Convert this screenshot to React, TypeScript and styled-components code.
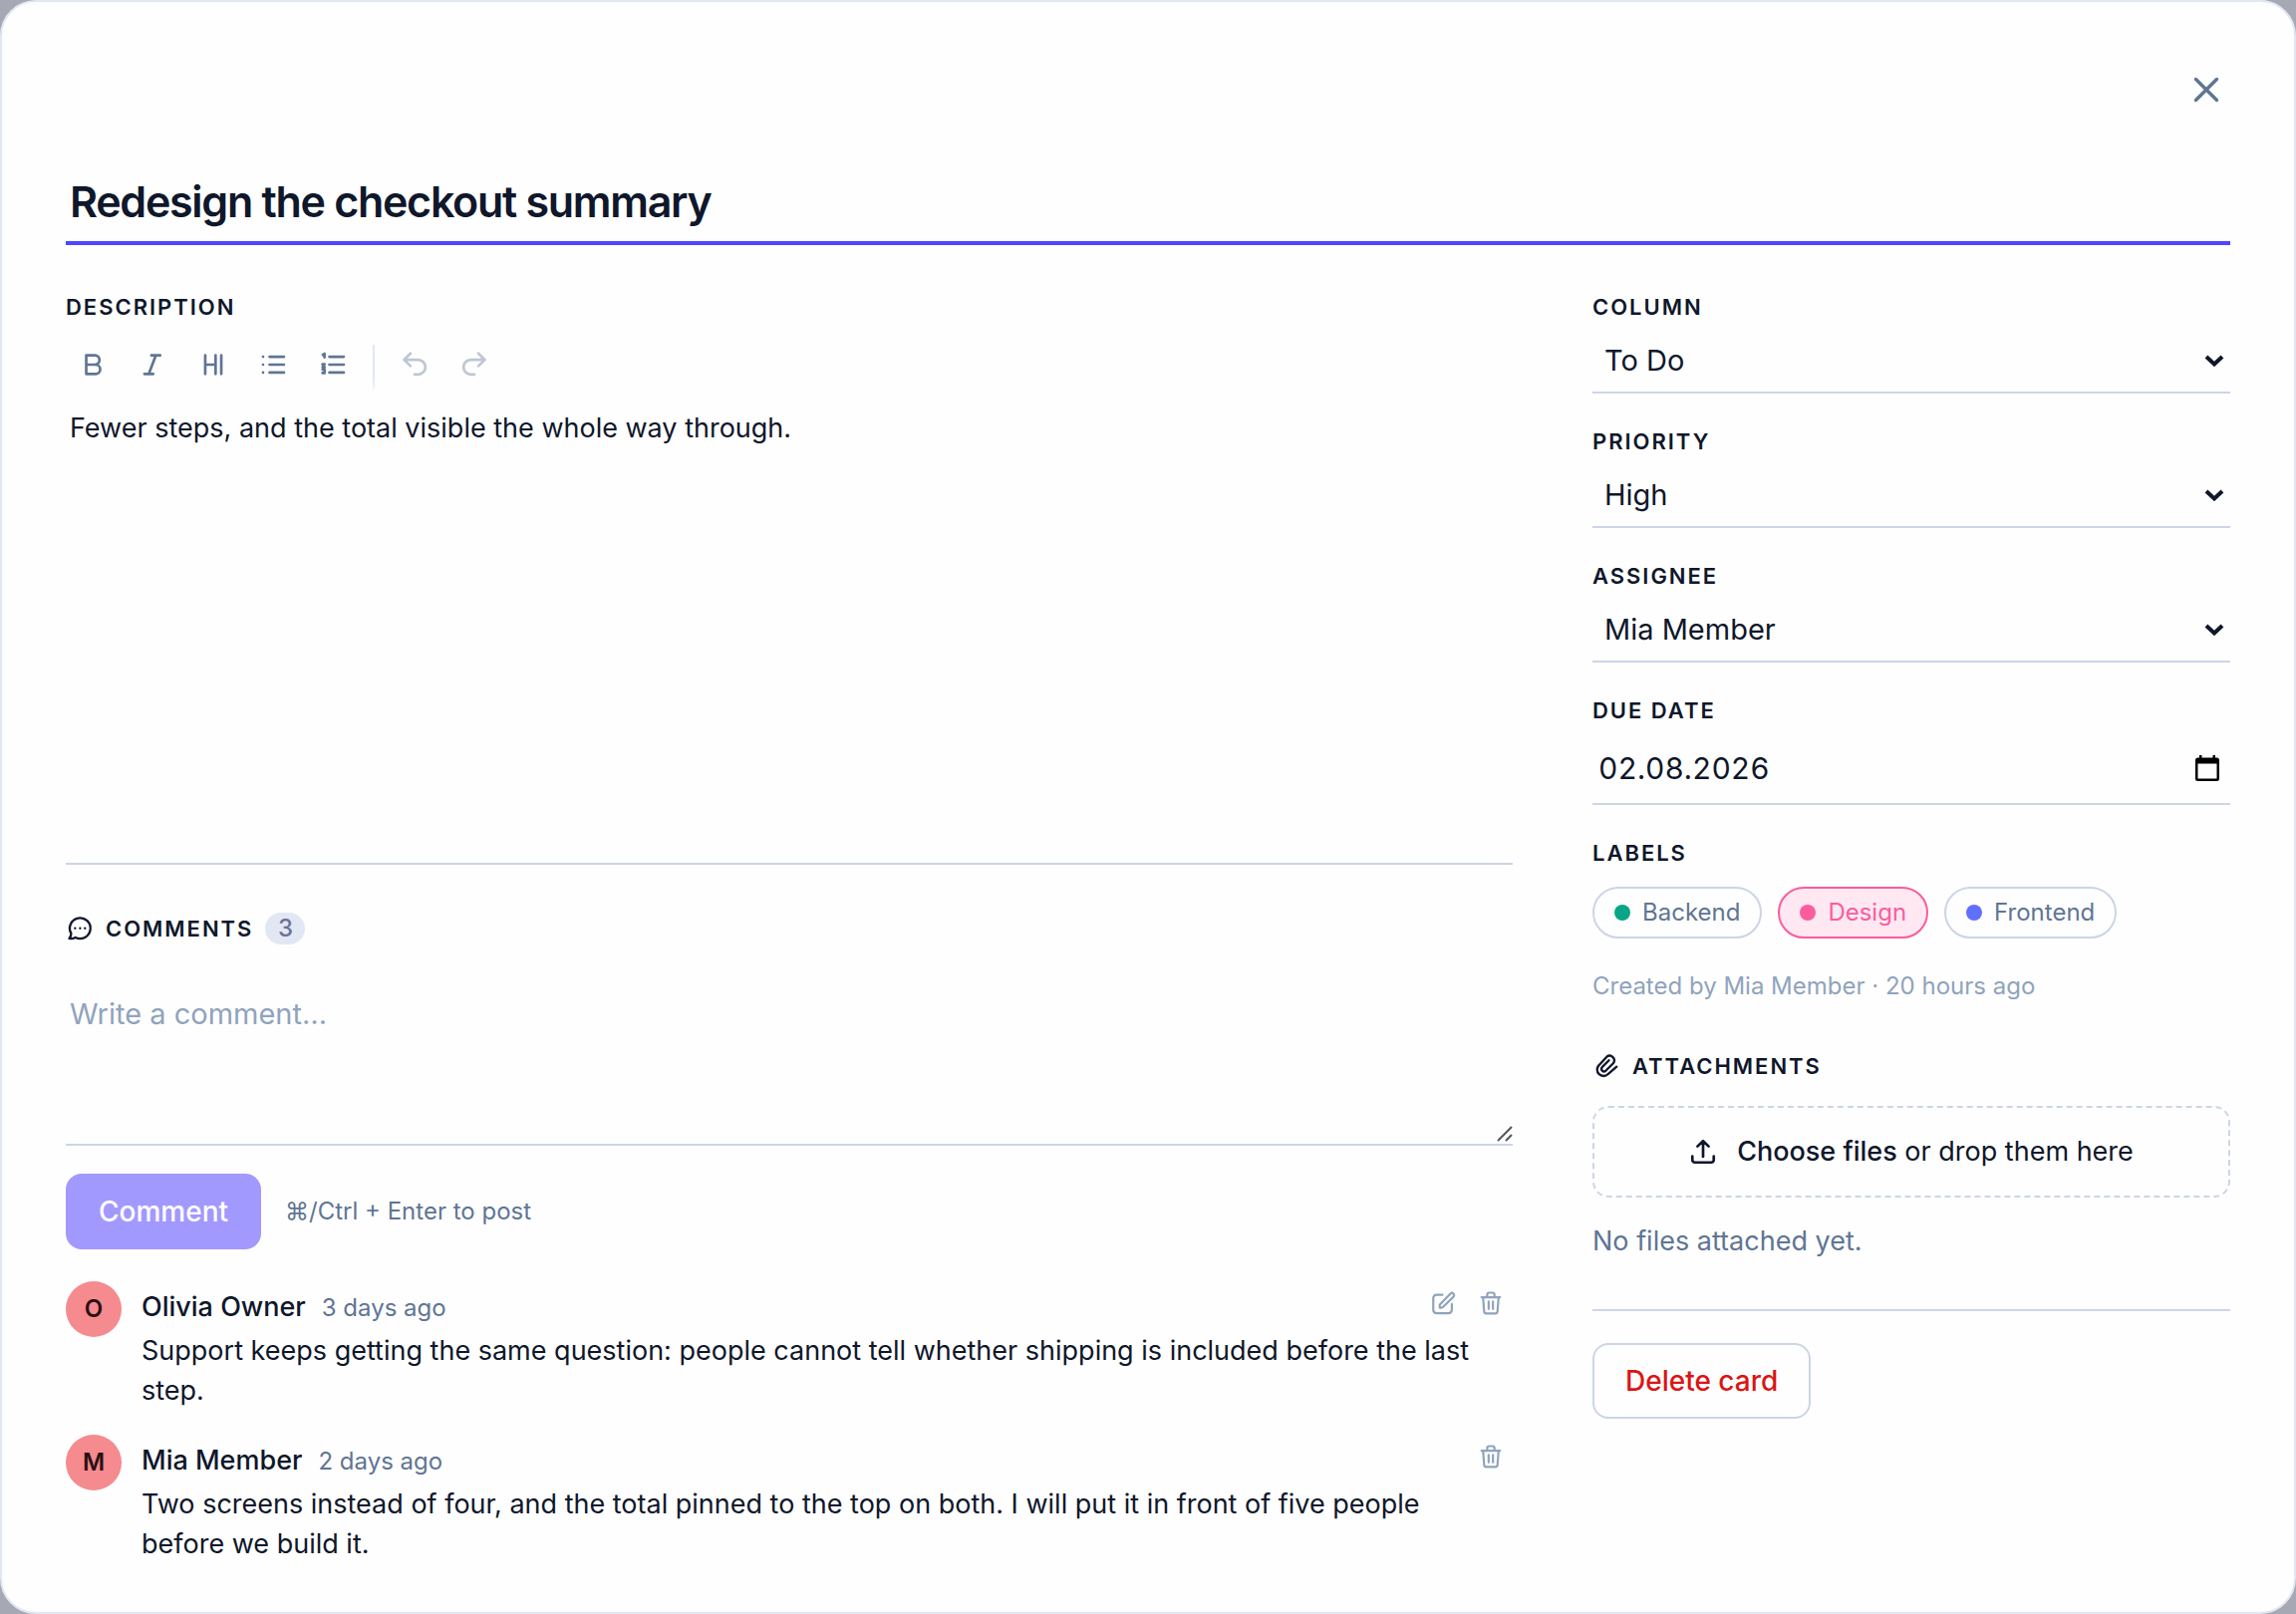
import React, { useState } from "react";
import styled, { createGlobalStyle, css } from "styled-components";

const c = {
  ink: "#0f172b",
  muted: "#607594",
  faint: "#90a3bd",
  line: "#ccd5e6",
  soft: "#e2e7f4",
  accent: "#5046ff",
  danger: "#dc1414",
};

const Global = createGlobalStyle`
  *, *::before, *::after { box-sizing: border-box; }
  body {
    margin: 0;
    background: #a6a9b3;
    color: ${c.ink};
    font-family: Inter, "Noto Sans", "Liberation Sans", sans-serif;
    font-size: 27px;
    line-height: 40px;
  }
  button, input, select, textarea { font: inherit; color: inherit; }
  button { cursor: pointer; }
`;

/* ---------- shell ---------- */

const Dialog = styled.main`
  display: flex;
  flex-direction: column;
  min-height: 100vh;
  padding: 64px 64px 48px;
  background: #fefefe;
  border: 2px solid ${c.soft};
  border-radius: 36px;
`;

const TopBar = styled.header`
  display: flex;
  justify-content: flex-end;
`;

const IconButton = styled.button<{ $size: number; $tone?: string }>`
  display: inline-flex;
  align-items: center;
  justify-content: center;
  flex: none;
  width: ${(p) => p.$size}px;
  height: ${(p) => p.$size}px;
  padding: 0;
  border: 0;
  border-radius: 12px;
  background: none;
  color: ${(p) => p.$tone ?? c.muted};

  &:disabled {
    opacity: 0.4;
    cursor: default;
  }
`;

const TitleInput = styled.input`
  width: 100%;
  height: 84px;
  margin-top: 48px;
  padding: 0 4px;
  border: 0;
  border-bottom: 4px solid ${c.accent};
  outline: none;
  background: none;
  font-size: 43px;
  font-weight: 600;
  letter-spacing: -0.03em;
`;

const Columns = styled.div`
  display: grid;
  grid-template-columns: minmax(0, 1fr) 640px;
  gap: 80px;
  margin-top: 44px;
`;

const MainColumn = styled.div`
  display: flex;
  flex-direction: column;
`;

const SideColumn = styled.aside`
  display: flex;
  flex-direction: column;
  gap: 30px;
`;

const caps = css`
  font-size: 22px;
  font-weight: 600;
  line-height: 36px;
  letter-spacing: 0.09em;
  text-transform: uppercase;
`;

const FieldLabel = styled.label`
  ${caps}
`;

const GroupLabel = styled.h2`
  ${caps}
  display: flex;
  align-items: center;
  gap: 12px;
  margin: 0;
`;

/* ---------- editor ---------- */

const Toolbar = styled.div`
  display: flex;
  align-items: center;
  gap: 4px;
  height: 56px;
  margin-top: 12px;
`;

const ToolDivider = styled.span`
  align-self: flex-end;
  width: 2px;
  height: 48px;
  margin: 0 8px;
  background: linear-gradient(${c.soft} 75%, transparent);
`;

const TextArea = styled.textarea<{ $height: number; $pad: number }>`
  display: block;
  width: 100%;
  height: ${(p) => p.$height}px;
  padding: ${(p) => p.$pad}px 4px 0;
  border: 0;
  border-bottom: 2px solid ${c.line};
  border-radius: 0;
  outline: none;
  background: none;
  resize: none;

  &::placeholder {
    color: ${c.faint};
    opacity: 1;
  }
`;

const CommentArea = styled(TextArea)`
  font-size: 29px;
  line-height: 44px;
`;

const ResizeBox = styled.div`
  position: relative;
  margin-top: 24px;
`;

const Grip = styled.svg`
  position: absolute;
  right: 0;
  bottom: 4px;
  width: 16px;
  height: 16px;
  color: #55565c;
  pointer-events: none;
`;

/* ---------- comments ---------- */

const CommentsHeading = styled(GroupLabel)`
  margin-top: 48px;
  line-height: 32px;
`;

const Count = styled.span`
  min-width: 40px;
  padding: 0 12px;
  border-radius: 16px;
  background: ${c.soft};
  color: #6b7299;
  font-size: 24px;
  font-weight: 500;
  letter-spacing: 0;
  text-align: center;
`;

const PostRow = styled.div`
  display: flex;
  align-items: center;
  gap: 24px;
  margin-top: 28px;
`;

const Button = styled.button<{ $kind: "primary" | "danger" }>`
  height: 76px;
  padding: 0 31px;
  border: 2px solid ${(p) => (p.$kind === "primary" ? "#a299ff" : c.line)};
  border-radius: 16px;
  background: ${(p) => (p.$kind === "primary" ? "#a299ff" : "transparent")};
  color: ${(p) => (p.$kind === "primary" ? "#ffffff" : c.danger)};
  font-size: 28px;
  font-weight: 500;
`;

const Small = styled.span<{ $tone?: string }>`
  color: ${(p) => p.$tone ?? c.muted};
  font-size: 24px;
  line-height: 36px;
`;

const CommentList = styled.ul`
  display: flex;
  flex-direction: column;
  gap: 24px;
  margin: 32px 0 0;
  padding: 0;
  list-style: none;
`;

const CommentItem = styled.li`
  display: grid;
  grid-template-columns: 56px minmax(0, 1fr);
  column-gap: 20px;
`;

const Avatar = styled.span`
  display: flex;
  align-items: center;
  justify-content: center;
  width: 56px;
  height: 56px;
  border-radius: 50%;
  background: #f58a8f;
  color: #2b0f14;
  font-size: 24px;
  font-weight: 600;
`;

const CommentHead = styled.div`
  display: flex;
  justify-content: space-between;
  height: 50px;
`;

const Byline = styled.div`
  display: flex;
  align-items: baseline;
  gap: 16px;
  padding-top: 6px;
`;

const Author = styled.strong`
  font-weight: 500;
`;

const Actions = styled.div`
  display: flex;
  gap: 4px;
`;

const Body = styled.p`
  margin: 0;
  padding-right: 16px;
`;

/* ---------- sidebar ---------- */

const Field = styled.div`
  display: flex;
  flex-direction: column;
  gap: 5px;
`;

const LabelsField = styled(Field)`
  gap: 16px;
`;

const ControlBox = styled.div`
  display: grid;
  align-items: center;

  & > * {
    grid-area: 1 / 1;
  }
  & > svg {
    justify-self: end;
    margin-bottom: 2px;
    pointer-events: none;
  }
`;

const control = css`
  width: 100%;
  border: 0;
  border-bottom: 2px solid ${c.line};
  border-radius: 0;
  outline: none;
  background: none;
`;

const Select = styled.select`
  ${control}
  height: 64px;
  padding: 0 12px;
  appearance: none;
  font-size: 29px;
`;

const DateInput = styled.input`
  ${control}
  height: 72px;
  padding: 0 6px;
  font-size: 30px;
  font-variant-numeric: tabular-nums;
`;

const Chevron = styled.svg`
  width: 20px;
  height: 12px;
  margin-right: 6px;
`;

const Calendar = styled.svg`
  width: 24px;
  height: 26px;
  margin-right: 11px;
`;

const Chips = styled.div`
  display: flex;
  flex-wrap: wrap;
  gap: 16px;
`;

const Chip = styled.button<{ $dot: string }>`
  display: inline-flex;
  align-items: center;
  gap: 12px;
  height: 52px;
  padding: 0 20px;
  border: 2px solid ${c.line};
  border-radius: 26px;
  background: none;
  color: ${c.muted};
  font-size: 24px;

  &::before {
    content: "";
    width: 16px;
    height: 16px;
    border-radius: 50%;
    background: ${(p) => p.$dot};
  }

  &[aria-pressed="true"] {
    border-color: ${(p) => p.$dot};
    background: #ffe8f2;
    color: ${(p) => p.$dot};
  }
`;

const Attachments = styled.section`
  display: flex;
  flex-direction: column;
  margin-top: 14px;
`;

const DropZone = styled.label`
  display: flex;
  align-items: center;
  justify-content: center;
  gap: 20px;
  height: 92px;
  margin-top: 22px;
  border: 2px dashed ${c.line};
  border-radius: 16px;
  cursor: pointer;

  input {
    position: absolute;
    width: 1px;
    height: 1px;
    opacity: 0;
  }
  strong {
    font-weight: 500;
  }
`;

const Empty = styled.p`
  margin: 24px 0 0;
  color: ${c.muted};
`;

const Footer = styled.div`
  margin-top: 18px;
  padding-top: 32px;
  border-top: 2px solid ${c.line};
`;

/* ---------- icons ---------- */

const Svg = styled.svg<{ $size: number }>`
  display: block;
  flex: none;
  width: ${(p) => p.$size}px;
  height: ${(p) => p.$size}px;
  fill: none;
  stroke: currentColor;
  stroke-linecap: round;
  stroke-linejoin: round;
`;

const paths = {
  close: "M5 5l14 14M19 5L5 19",
  bold: "M5.6 4H13a4 4 0 0 1 0 8H5.6zM5.6 12h8a4 4 0 0 1 0 8h-8z",
  italic: "M4.2 20h7.6M10.2 4h7.6M8 20 14 4",
  heading: "M5.1 4v16M14 4v16M5.1 12H14M18.9 4v16",
  bullets: "M9 5.2h12.4M9 12h12.4M9 18.8h12.4M3.4 5.2h.01M3.4 12h.01M3.4 18.8h.01",
  numbers:
    "M9 5.2h12.4M9 12h12.4M9 18.8h12.4M3.4 3.6l1.400-1v3.200M3 11.6h1.900l-1.700 2.600h1.700M3.200 16.200h1.700v3H3.100",
  undo: "M8.5 13.2 3 7.8l5.5-5.5M3 7.8h12a6.1 6.1 0 0 1 0 12.6h-3",
  redo: "M15.5 13.2 21 7.8l-5.5-5.5M21 7.8H9a6.1 6.1 0 0 0 0 12.6h3",
  edit:
    "M11.5 4.3H6a3 3 0 0 0-3 3v11a3 3 0 0 0 3 3h11.2a3 3 0 0 0 3-3v-5.5M9 16.2v-2.9L18.9 3.2a2 2 0 0 1 2.8 0 2 2 0 0 1 0 2.9L12.4 15.3c-.6.6-1 .9-1.8.9z",
  trash:
    "M3.4 6.5h17.2M8.6 6.5V4.3a2 2 0 0 1 2-2h2.8a2 2 0 0 1 2 2v2.2M4.8 6.5l1 13a2.2 2.2 0 0 0 2.2 2.1h8a2.2 2.2 0 0 0 2.2-2.1l1-13M10 10.4v7M14 10.4v7",
  chat:
    "M4.6 16.2A8.9 8.9 0 1 1 8.3 19.7C6.6 20.6 4.8 20.8 3 20.5 4 19.2 4.7 17.8 4.6 16.2zM8 11.8h.01M12.3 11.8h.01M16.5 11.8h.01",
  clip:
    "M20.8 12.6 13.4 18.9A5.4 5.4 0 0 1 5.6 11.3L12.3 4a4 4 0 0 1 5.6 5.6l-6.5 6.5a2.2 2.2 0 0 1-3.1-3.1l5.9-5.9",
  upload:
    "M2.8 16v3a2.2 2.2 0 0 0 2.2 2.2h14a2.2 2.2 0 0 0 2.2-2.2v-3M7.2 7.4 12 2.8l4.8 4.6M12 3v13.2",
};

type IconName = keyof typeof paths;

function Icon({ name, size = 28, weight = 2 }: { name: IconName; size?: number; weight?: number }) {
  return (
    <Svg $size={size} viewBox="0 0 24 24" strokeWidth={weight} aria-hidden="true">
      <path d={paths[name]} />
    </Svg>
  );
}

/* ---------- pieces ---------- */

const tools: { icon: IconName; label: string }[] = [
  { icon: "bold", label: "Bold" },
  { icon: "italic", label: "Italic" },
  { icon: "heading", label: "Heading" },
  { icon: "bullets", label: "Bulleted list" },
  { icon: "numbers", label: "Numbered list" },
];

const comments = [
  {
    author: "Olivia Owner",
    when: "3 days ago",
    editable: true,
    text: "Support keeps getting the same question: people cannot tell whether shipping is included before the last step.",
  },
  {
    author: "Mia Member",
    when: "2 days ago",
    editable: false,
    text: "Two screens instead of four, and the total pinned to the top on both. I will put it in front of five people before we build it.",
  },
];

const labels = [
  { name: "Backend", color: "#08a687" },
  { name: "Design", color: "#fb5c9d" },
  { name: "Frontend", color: "#616fff" },
];

function SelectField({ id, label, options }: { id: string; label: string; options: string[] }) {
  return (
    <Field>
      <FieldLabel htmlFor={id}>{label}</FieldLabel>
      <ControlBox>
        <Select id={id} defaultValue={options[0]}>
          {options.map((o) => (
            <option key={o}>{o}</option>
          ))}
        </Select>
        <Chevron viewBox="0 0 20 12" aria-hidden="true">
          <path d="M2 2l8 7.5L18 2" fill="none" stroke={c.ink} strokeWidth="4" />
        </Chevron>
      </ControlBox>
    </Field>
  );
}

export default function App() {
  const [active, setActive] = useState<string[]>(["Design"]);
  const toggle = (name: string) =>
    setActive((a) => (a.includes(name) ? a.filter((n) => n !== name) : [...a, name]));

  return (
    <>
      <Global />
      <Dialog>
        <TopBar>
          <IconButton $size={48} aria-label="Close">
            <Icon name="close" size={36} weight={2.3} />
          </IconButton>
        </TopBar>
        <TitleInput aria-label="Card title" defaultValue="Redesign the checkout summary" />

        <Columns>
          <MainColumn>
            <FieldLabel htmlFor="description">Description</FieldLabel>
            <Toolbar role="toolbar" aria-label="Formatting">
              {tools.map((t) => (
                <IconButton key={t.icon} $size={56} aria-label={t.label}>
                  <Icon name={t.icon} weight={2.3} />
                </IconButton>
              ))}
              <ToolDivider />
              <IconButton $size={56} aria-label="Undo" disabled>
                <Icon name="undo" weight={2.3} />
              </IconButton>
              <IconButton $size={56} aria-label="Redo" disabled>
                <Icon name="redo" weight={2.3} />
              </IconButton>
            </Toolbar>
            <TextArea
              id="description"
              $height={474}
              $pad={16}
              defaultValue="Fewer steps, and the total visible the whole way through."
            />

            <CommentsHeading>
              <Icon name="chat" />
              Comments
              <Count>3</Count>
            </CommentsHeading>
            <ResizeBox>
              <CommentArea $height={178} $pad={24} aria-label="Write a comment" placeholder="Write a comment…" />
              <Grip viewBox="0 0 16 16" aria-hidden="true">
                <path d="M1 15 15 1M9 15l6-6" fill="none" stroke="currentColor" strokeWidth="2" />
              </Grip>
            </ResizeBox>
            <PostRow>
              <Button $kind="primary">Comment</Button>
              <Small>⌘/Ctrl + Enter to post</Small>
            </PostRow>

            <CommentList>
              {comments.map((item) => (
                <CommentItem key={item.author}>
                  <Avatar aria-hidden="true">{item.author[0]}</Avatar>
                  <div>
                    <CommentHead>
                      <Byline>
                        <Author>{item.author}</Author>
                        <Small>{item.when}</Small>
                      </Byline>
                      <Actions>
                        {item.editable && (
                          <IconButton $size={44} $tone={c.faint} aria-label="Edit comment">
                            <Icon name="edit" size={26} />
                          </IconButton>
                        )}
                        <IconButton $size={44} $tone={c.faint} aria-label="Delete comment">
                          <Icon name="trash" size={26} />
                        </IconButton>
                      </Actions>
                    </CommentHead>
                    <Body>{item.text}</Body>
                  </div>
                </CommentItem>
              ))}
            </CommentList>
          </MainColumn>

          <SideColumn>
            <SelectField id="column" label="Column" options={["To Do", "In Progress", "Done"]} />
            <SelectField id="priority" label="Priority" options={["High", "Medium", "Low"]} />
            <SelectField id="assignee" label="Assignee" options={["Mia Member", "Olivia Owner"]} />
            <Field>
              <FieldLabel htmlFor="due">Due date</FieldLabel>
              <ControlBox>
                <DateInput id="due" defaultValue="02.08.2026" />
                <Calendar viewBox="0 0 24 26" aria-hidden="true">
                  <path
                    fillRule="evenodd"
                    d="M4 0h2.5v2.5h11V0H20v2.5h1.500A2.5 2.5 0 0 1 24 5v18.5a2.5 2.5 0 0 1-2.5 2.5h-19A2.5 2.5 0 0 1 0 23.5V5a2.5 2.5 0 0 1 2.5-2.5H4zM2.5 8.5v15h19v-15z"
                  />
                </Calendar>
              </ControlBox>
            </Field>
            <LabelsField>
              <GroupLabel>Labels</GroupLabel>
              <Chips>
                {labels.map((l) => (
                  <Chip
                    key={l.name}
                    $dot={l.color}
                    aria-pressed={active.includes(l.name)}
                    onClick={() => toggle(l.name)}
                  >
                    {l.name}
                  </Chip>
                ))}
              </Chips>
            </LabelsField>
            <Small $tone={c.faint}>Created by Mia Member · 20 hours ago</Small>

            <Attachments>
              <GroupLabel>
                <Icon name="clip" />
                Attachments
              </GroupLabel>
              <DropZone>
                <input type="file" multiple />
                <Icon name="upload" weight={2.3} />
                <span>
                  <strong>Choose files</strong> or drop them here
                </span>
              </DropZone>
              <Empty>No files attached yet.</Empty>
            </Attachments>
            <Footer>
              <Button $kind="danger">Delete card</Button>
            </Footer>
          </SideColumn>
        </Columns>
      </Dialog>
    </>
  );
}
